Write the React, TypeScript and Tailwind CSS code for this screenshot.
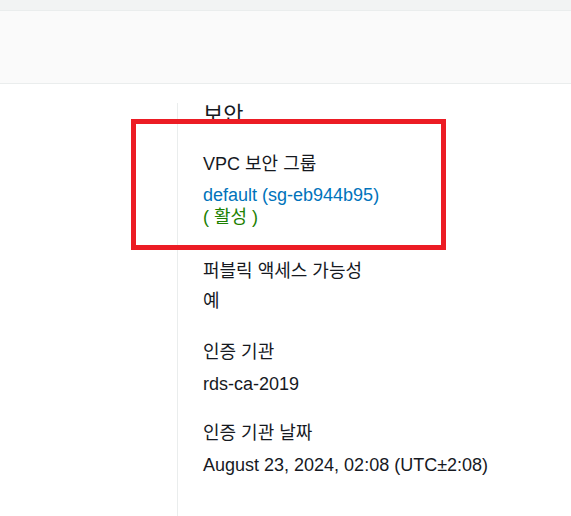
import React from "react";

const font = { fontFamily: '"Liberation Sans", "Noto Sans CJK KR", sans-serif' };

export default function App() {
  return (
    <div className="relative w-[571px] h-[516px] overflow-hidden bg-white" style={font}>
      <div className="h-[11px] bg-[#f2f3f3] border-b border-[#eaeded]" />
      <div className="h-[73px] bg-[#fafafa] border-b border-[#eaeded]" />
      <div className="flex pt-[19px]">
        <div className="w-[178px] shrink-0 border-r border-[#eaeded] h-[420px]" />
        <div className="pl-[25px] flex flex-col text-[18px] leading-[22px] text-[#16191f]">
          <h2 className="text-[22px] leading-[28px] font-normal -mt-[2px]">보안</h2>
          <div className="mt-[24px]">VPC 보안 그룹</div>
          <div className="mt-[9px] text-[#0073bb]">default (sg-eb944b95)</div>
          <div className="text-[#1d8102]">( 활성 )</div>
          <div className="mt-[32px]">퍼블릭 액세스 가능성</div>
          <div className="mt-[8px]">예</div>
          <div className="mt-[29px]">인증 기관</div>
          <div className="mt-[10px]">rds-ca-2019</div>
          <div className="mt-[27px]">인증 기관 날짜</div>
          <div className="mt-[10px]">August 23, 2024, 02:08 (UTC±2:08)</div>
        </div>
      </div>
      <div className="absolute left-[131px] top-[119px] w-[315px] h-[131px] border-[5px] border-[#ec1c24]" />
    </div>
  );
}
